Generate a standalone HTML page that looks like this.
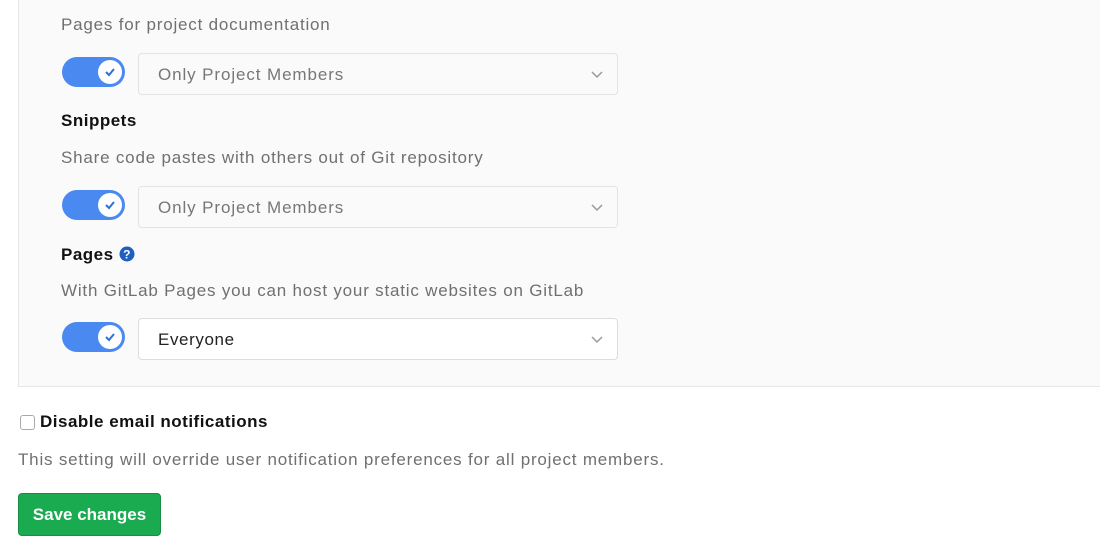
<!DOCTYPE html>
<html><head><style>
body{margin:0;width:1100px;height:550px;background:#fff;font-family:"Liberation Sans",sans-serif;position:relative;overflow:hidden}
.panel{position:absolute;left:18px;top:-2px;width:1090px;height:389px;background:#fafafa;border:1px solid #e5e5e5;box-sizing:border-box}
.t{position:absolute;font-size:17px;line-height:20px;white-space:nowrap}
.g{color:#707070;letter-spacing:0.8px}
.b{color:#111;font-weight:bold;letter-spacing:0.5px}
.tog{position:absolute;left:62px;width:63px;height:30px;border-radius:15px;background:#4a8af0}
.tog:after{content:"";position:absolute;right:3px;top:3px;width:24px;height:24px;border-radius:50%;background:#fff}
.tog svg{position:absolute;right:8px;top:9px;z-index:1}
.sel{position:absolute;left:138px;width:480px;height:42px;border:1px solid #e3e3e3;border-radius:4px;box-sizing:border-box;background:#fafafa}
.sel span{position:absolute;left:19px;top:11px;font-size:17px;color:#777;letter-spacing:0.9px}
.sel svg{position:absolute;right:14px;top:17px}
</style></head><body>
<div class="panel"></div>
<div class="t g" style="left:61px;top:15px">Pages for project documentation</div>
<div class="tog" style="top:57px"><svg width="14" height="12" viewBox="0 0 14 12"><path d="M3 6l3 3 5-6" stroke="#2f6fd6" stroke-width="2" fill="none"/></svg></div>
<div class="sel" style="top:53px"><span>Only Project Members</span><svg width="12" height="8"><path d="M1 1l5 5 5-5" stroke="#999" stroke-width="1.5" fill="none"/></svg></div>
<div class="t b" style="left:61px;top:111px">Snippets</div>
<div class="t g" style="left:61px;top:148px">Share code pastes with others out of Git repository</div>
<div class="tog" style="top:190px"><svg width="14" height="12" viewBox="0 0 14 12"><path d="M3 6l3 3 5-6" stroke="#2f6fd6" stroke-width="2" fill="none"/></svg></div>
<div class="sel" style="top:186px"><span>Only Project Members</span><svg width="12" height="8"><path d="M1 1l5 5 5-5" stroke="#999" stroke-width="1.5" fill="none"/></svg></div>
<div class="t b" style="left:61px;top:245px">Pages <svg width="16" height="16" viewBox="0 0 16 16" style="vertical-align:-2px"><circle cx="8" cy="8" r="7.5" fill="#1f5fbf"/><text x="8" y="12.5" font-size="12" font-weight="bold" fill="#fff" text-anchor="middle" font-family="Liberation Sans">?</text></svg></div>
<div class="t g" style="left:61px;top:281px">With GitLab Pages you can host your static websites on GitLab</div>
<div class="tog" style="top:322px"><svg width="14" height="12" viewBox="0 0 14 12"><path d="M3 6l3 3 5-6" stroke="#2f6fd6" stroke-width="2" fill="none"/></svg></div>
<div class="sel" style="top:318px;background:#fff;border-color:#ddd"><span style="color:#222;letter-spacing:0.6px">Everyone</span><svg width="12" height="8"><path d="M1 1l5 5 5-5" stroke="#999" stroke-width="1.5" fill="none"/></svg></div>
<div style="position:absolute;left:20px;top:415px;width:13px;height:13px;border:1px solid #aaa;border-radius:3px;background:#fff"></div>
<div class="t b" style="left:40px;top:412px">Disable email notifications</div>
<div class="t g" style="left:18px;top:450px">This setting will override user notification preferences for all project members.</div>
<div style="position:absolute;left:18px;top:493px;width:143px;height:43px;background:#1aaa4f;border:1px solid #168f42;border-radius:4px;box-sizing:border-box;color:#fff;font-weight:bold;font-size:17px;line-height:41px;text-align:center">Save changes</div>
</body></html>
